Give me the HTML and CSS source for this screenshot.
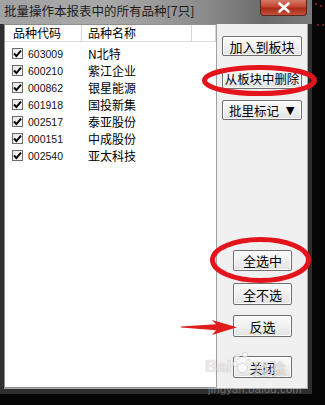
FILE: index.html
```html
<!DOCTYPE html>
<html lang="zh-CN">
<head>
<meta charset="utf-8">
<title>批量操作</title>
<link rel="stylesheet" href="styles.css">
</head>
<body>
<div class="window">
  <div class="titlebar">
    <div class="title">批量操作本报表中的所有品种[7只]</div>
    <div class="close">
      <svg width="14" height="11" viewBox="0 0 14 11"><path d="M2.5 1.5 L11.5 9.5 M11.5 1.5 L2.5 9.5" stroke="#fff" stroke-width="2.6" stroke-linecap="round"/></svg>
    </div>
  </div>
  <div class="client">
    <div class="list">
      <div class="head">
        <div class="hc hc1">品种代码</div>
        <div class="hc hc2">品种名称</div>
        <div class="hc hc3"></div>
      </div>
      <div class="rows">
        <div class="row"><span class="cb"><svg width="9" height="9" viewBox="0 0 9 9"><path d="M1 4.5 L3.4 7 L8 1.6" fill="none" stroke="#000" stroke-width="1.9"/></svg></span><span class="code">603009</span><span class="name">N北特</span></div>
        <div class="row"><span class="cb"><svg width="9" height="9" viewBox="0 0 9 9"><path d="M1 4.5 L3.4 7 L8 1.6" fill="none" stroke="#000" stroke-width="1.9"/></svg></span><span class="code">600210</span><span class="name">紫江企业</span></div>
        <div class="row"><span class="cb"><svg width="9" height="9" viewBox="0 0 9 9"><path d="M1 4.5 L3.4 7 L8 1.6" fill="none" stroke="#000" stroke-width="1.9"/></svg></span><span class="code">000862</span><span class="name">银星能源</span></div>
        <div class="row"><span class="cb"><svg width="9" height="9" viewBox="0 0 9 9"><path d="M1 4.5 L3.4 7 L8 1.6" fill="none" stroke="#000" stroke-width="1.9"/></svg></span><span class="code">601918</span><span class="name">国投新集</span></div>
        <div class="row"><span class="cb"><svg width="9" height="9" viewBox="0 0 9 9"><path d="M1 4.5 L3.4 7 L8 1.6" fill="none" stroke="#000" stroke-width="1.9"/></svg></span><span class="code">002517</span><span class="name">泰亚股份</span></div>
        <div class="row"><span class="cb"><svg width="9" height="9" viewBox="0 0 9 9"><path d="M1 4.5 L3.4 7 L8 1.6" fill="none" stroke="#000" stroke-width="1.9"/></svg></span><span class="code">000151</span><span class="name">中成股份</span></div>
        <div class="row"><span class="cb"><svg width="9" height="9" viewBox="0 0 9 9"><path d="M1 4.5 L3.4 7 L8 1.6" fill="none" stroke="#000" stroke-width="1.9"/></svg></span><span class="code">002540</span><span class="name">亚太科技</span></div>
      </div>
    </div>
    <div class="panel">
      <div class="btn wide b1">加入到板块</div>
      <div class="btn wide b2">从板块中删除</div>
      <div class="btn wide b3">批里标记<span class="tri">▼</span></div>
      <div class="btn narrow b4">全选中</div>
      <div class="btn narrow b5">全不选</div>
      <div class="btn narrow b6">反选</div>
      <div class="btn narrow b7">关闭</div>
    </div>
  </div>
</div>
<div class="dots">
  <span class="dot d1"></span><span class="dot d2"></span><span class="dot d3"></span><span class="dot d4"></span>
</div>
<svg class="marks" width="325" height="405" viewBox="0 0 325 405">
  <ellipse cx="259.5" cy="80.5" rx="55" ry="13" fill="none" stroke="#e3141b" stroke-width="5"/>
  <ellipse cx="260.5" cy="260" rx="48" ry="20.5" fill="none" stroke="#e3141b" stroke-width="5"/>
  <polygon points="181,326.6 216,324.3 212,320 237,327.3 212,335 216,330.3 181,327.6" fill="#e01c1c"/>
</svg>
<div class="watermark">
  <div class="wm-top"><span class="wm-bai">Bai</span><svg class="paw" width="20" height="24" viewBox="0 0 20 24"><circle cx="5" cy="6" r="2.6"/><circle cx="13" cy="4" r="2.6"/><circle cx="3" cy="13" r="2.4"/><circle cx="17" cy="11" r="2.4"/><ellipse cx="10.5" cy="17" rx="5" ry="4.5"/></svg><span class="wm-jy">经验</span></div>
  <div class="wm-url">jingyan.baidu.com</div>
</div>
</body>
</html>
```
FILE: styles.css
```css
html, body {
  margin: 0;
  padding: 0;
}
body {
  width: 325px;
  height: 405px;
  background: #050505;
  position: relative;
  overflow: hidden;
  font-family: "Noto Sans CJK SC", "Noto Sans", sans-serif;
}
.window {
  width: 312px;
  height: 394px;
  background: #2f2f2f;
  display: flex;
  flex-direction: column;
}
.titlebar {
  height: 24px;
  flex: none;
  display: flex;
  align-items: flex-start;
  padding-left: 4px;
  background: linear-gradient(to right, #a2a2a2 0%, #a9a9a9 35%, #8c8c8c 65%, #6a6a6a 85%, #7a7a7a 100%);
}
.title {
  font-size: 12.5px;
  line-height: 22px;
  color: #1c1c1c;
  white-space: nowrap;
}
.close {
  margin-left: auto;
  margin-right: 5px;
  width: 47px;
  height: 16px;
  box-sizing: border-box;
  border: 1px solid #5b2620;
  border-top: none;
  border-radius: 0 0 4px 4px;
  background: linear-gradient(to bottom, #d27a66 0%, #c4462f 45%, #a82a18 55%, #c4503a 100%);
  display: flex;
  align-items: center;
  justify-content: center;
}
.client {
  flex: 1;
  display: flex;
  margin: 0 4px 5px 4px;
  background: #f0f0f0;
  border-right: 1px solid #a6a6a6;
  border-bottom: 1px solid #a6a6a6;
}
.list {
  width: 213px;
  box-sizing: border-box;
  background: #fff;
  border: 1px solid #8d8d8d;
  border-right-color: #a0a0a0;
  display: flex;
  flex-direction: column;
}
.head {
  display: flex;
  height: 16px;
  border-bottom: 1px solid #dcdcdc;
  font-size: 12px;
  line-height: 16px;
  color: #000;
}
.hc {
  box-sizing: border-box;
  border-right: 1px solid #d8d8d8;
  white-space: nowrap;
}
.hc1 { width: 77px; padding-left: 8px; }
.hc2 { width: 110px; padding-left: 6px; }
.hc3 { width: 24px; }
.rows {
  padding-top: 3px;
}
.row {
  height: 17px;
  display: flex;
  align-items: center;
}
.cb {
  width: 11px;
  height: 11px;
  box-sizing: border-box;
  border: 1px solid #6c6c6c;
  background: linear-gradient(to bottom right, #e6e6e6, #fcfcfc);
  margin-left: 7px;
  display: flex;
  align-items: center;
  justify-content: center;
}
.code {
  font-family: "Liberation Sans", Arial, sans-serif;
  font-size: 10.5px;
  color: #111;
  margin-left: 5px;
  width: 54px;
}
.name {
  font-size: 12px;
  color: #000;
  margin-left: 6px;
}
.panel {
  flex: 1;
  display: flex;
  flex-direction: column;
  padding-top: 12px;
}
.btn {
  box-sizing: border-box;
  border: 1px solid #6f6f6f;
  border-radius: 2px;
  background: linear-gradient(to bottom, #fbfbfb 0%, #f0f0f0 50%, #e2e2e2 100%);
  box-shadow: inset 0 0 0 1px #fdfdfd;
  color: #000;
  font-size: 13px;
  display: flex;
  align-items: center;
  justify-content: center;
  white-space: nowrap;
}
.wide {
  width: 80px;
  height: 20px;
  margin-left: 5px;
}
.narrow {
  width: 59px;
  height: 22px;
  margin-left: 16px;
}
.b2 { margin-top: 13px; font-size: 12.4px; }
.b3 { margin-top: 11px; justify-content: flex-start; padding-left: 6px; font-size: 12.5px; }
.tri { margin-left: 7px; font-family: "DejaVu Sans", sans-serif; font-size: 11px; }
.b4 { margin-top: 130px; height: 21px; }
.b5 { margin-top: 12px; }
.b6 { margin-top: 10px; }
.b7 { margin-top: 19px; }
.marks {
  position: absolute;
  left: 0;
  top: 0;
  pointer-events: none;
}
.dots {
  position: absolute;
  left: 313px;
  top: 0;
  width: 12px;
  height: 40px;
}
.dot {
  position: absolute;
  width: 2px;
  height: 2px;
  background: #7a1a1a;
}
.d1 { left: 2px; top: 3px; }
.d2 { left: 7px; top: 5px; }
.d3 { left: 4px; top: 24px; }
.d4 { left: 9px; top: 24px; }
.watermark {
  position: absolute;
  left: 205px;
  top: 348px;
  width: 95px;
  pointer-events: none;
}
.wm-top {
  display: flex;
  align-items: flex-end;
  height: 30px;
}
.wm-bai {
  font-family: "Liberation Sans", Arial, sans-serif;
  font-weight: bold;
  font-size: 17px;
  line-height: 18px;
  color: rgba(255, 255, 255, 0.75);
  text-shadow: 0 0 1px rgba(0, 0, 0, 0.35);
  margin-bottom: 2px;
}
.paw {
  fill: rgba(255, 255, 255, 0.7);
  stroke: rgba(120, 120, 120, 0.35);
  stroke-width: 0.6;
  margin-left: 1px;
  margin-bottom: 3px;
}
.wm-jy {
  font-size: 16px;
  line-height: 20px;
  font-weight: bold;
  color: rgba(255, 255, 255, 0.7);
  text-shadow: 0 0 1px rgba(0, 0, 0, 0.35);
  margin-left: 1px;
}
.wm-url {
  font-family: "Liberation Sans", Arial, sans-serif;
  font-size: 11px;
  line-height: 12px;
  color: rgba(255, 255, 255, 0.32);
  margin-top: 5px;
  margin-left: 3px;
  letter-spacing: 0.3px;
}
```
